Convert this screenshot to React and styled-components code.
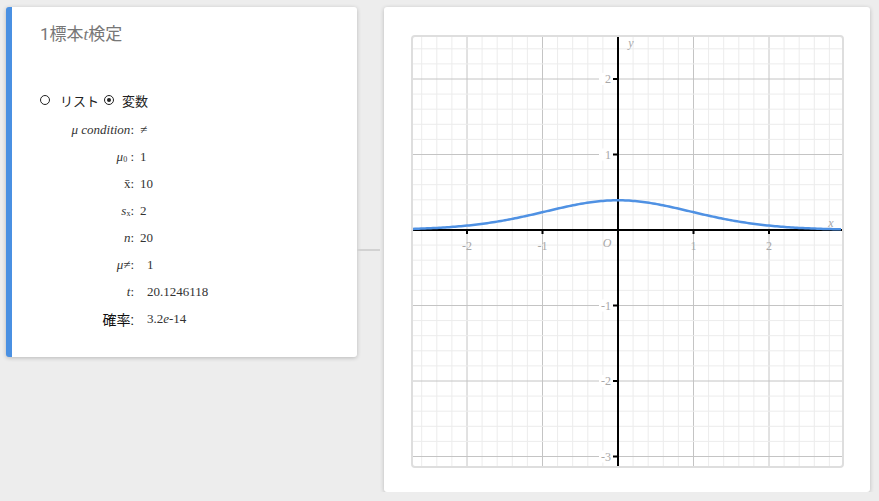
import React from "react";
import styled, { createGlobalStyle } from "styled-components";

const GlobalStyle = createGlobalStyle`
  html, body {
    margin: 0;
    background: #ededed;
  }
  body {
    font-family: Roboto, "Noto Sans CJK JP", sans-serif;
  }
`;

const Page = styled.div`
  display: flex;
  align-items: flex-start;
  padding: 7px 0 0 6px;
`;

const Card = styled.section`
  box-sizing: border-box;
  background: #fff;
  border-radius: 3px;
  box-shadow: 0 1px 4px rgba(0, 0, 0, 0.22);
`;

const TestCard = styled(Card)`
  width: 351px;
  height: 350px;
  border-left: 6px solid #4a90e2;
  padding: 17px 0 0 28px;
`;

const Title = styled.h2`
  margin: 0;
  height: 20px;
  line-height: 20px;
  font-size: 17px;
  font-weight: 400;
  color: #777;
`;

const MathVar = styled.i`
  font-family: "Liberation Serif", "DejaVu Serif", serif;
  font-style: italic;
`;

const RadioRow = styled.div`
  display: flex;
  align-items: center;
  height: 20px;
  margin-top: 46px;
  font-size: 13px;
  color: #222;
`;

const Radio = styled.span`
  box-sizing: border-box;
  width: 10px;
  height: 10px;
  border-radius: 50%;
  border: 1.5px solid #222;
  margin-right: ${(p) => (p.$checked ? "8px" : "10px")};
  display: flex;
  align-items: center;
  justify-content: center;

  &::after {
    content: "";
    display: ${(p) => (p.$checked ? "block" : "none")};
    width: 4px;
    height: 4px;
    border-radius: 50%;
    background: #222;
  }
`;

const RadioLabel = styled.span`
  margin-right: 5px;
`;

const Fields = styled.div`
  display: grid;
  grid-template-columns: 94px auto;
  grid-auto-rows: 27px;
  column-gap: 6px;
  align-items: center;
  margin-top: 6px;
`;

const Label = styled.span`
  justify-self: end;
  white-space: nowrap;
  font-family: ${(p) =>
    p.$cjk
      ? 'Roboto, "Noto Sans CJK JP", sans-serif'
      : '"Liberation Serif", "DejaVu Serif", serif'};
  font-style: ${(p) => (p.$cjk ? "normal" : "italic")};
  font-size: ${(p) => (p.$cjk ? "14px" : "13px")};
  color: ${(p) => (p.$cjk ? "#111" : "#333")};

  sub {
    font-size: 8px;
    font-style: normal;
    vertical-align: -1px;
  }
`;

const Plain = styled.span`
  font-style: normal;
`;

const Value = styled.span`
  font-family: "Liberation Serif", "DejaVu Serif", serif;
  font-size: 13px;
  color: #333;
  padding-left: ${(p) => (p.$indent ? "7px" : "0")};
`;

const Connector = styled.div`
  width: 23px;
  height: 2px;
  margin: 242px 4px 0 0;
  background: #d2d2d2;
`;

const GraphCard = styled(Card)`
  width: 486px;
  height: 485px;
  padding: 28px 26px 24px 27px;
`;

const GraphFrame = styled.div`
  box-sizing: border-box;
  width: 433px;
  height: 433px;
  border: 2px solid #dedede;
  border-radius: 4px;
  overflow: hidden;
  background: #fff;
`;

const W = 429;
const H = 429;
const OX = 205;
const OY = 193;
const U = 75.5;

// t distribution, 19 degrees of freedom
const pdf = (x) => 0.3937 * Math.pow(1 + (x * x) / 19, -10);

function Graph() {
  const step = U / 5;
  const vLines = [];
  for (let k = Math.ceil(-OX / step); k <= Math.floor((W - OX) / step); k++) {
    vLines.push({ k, pos: OX + k * step });
  }
  const hLines = [];
  for (let k = Math.ceil((OY - H) / step); k <= Math.floor(OY / step); k++) {
    hLines.push({ k, pos: OY - k * step });
  }
  const majorX = vLines.filter((l) => l.k % 5 === 0 && l.k !== 0);
  const majorY = hLines.filter((l) => l.k % 5 === 0 && l.k !== 0);

  let d = "";
  for (let px = 0; px <= W; px += 2) {
    const y = OY - pdf((px - OX) / U) * U;
    d += `${px === 0 ? "M" : "L"}${px},${y.toFixed(2)} `;
  }

  const labelFont = { fontFamily: '"Liberation Serif", "DejaVu Serif", serif', fontSize: 12, fill: "#a8a8a8" };
  const num = (k) => (k < 0 ? `-${-k / 5}` : `${k / 5}`);

  return (
    <svg width={W} height={H} viewBox={`0 0 ${W} ${H}`}>
      {vLines.map((l) => (
        <line key={`v${l.k}`} x1={l.pos} x2={l.pos} y1={0} y2={H}
          stroke={l.k % 5 === 0 ? "#c4c4c4" : "#ececec"} strokeWidth="1" />
      ))}
      {hLines.map((l) => (
        <line key={`h${l.k}`} x1={0} x2={W} y1={l.pos} y2={l.pos}
          stroke={l.k % 5 === 0 ? "#c4c4c4" : "#ececec"} strokeWidth="1" />
      ))}
      {majorY.map((l) => (
        <g key={`yl${l.k}`}>
          <rect x={OX - 19} y={l.pos - 6} width={14} height={12} fill="#fff" />
          <text x={OX - 7} y={l.pos + 4} textAnchor="end" {...labelFont}>{num(l.k)}</text>
        </g>
      ))}
      {majorX.map((l) => (
        <text key={`xl${l.k}`} x={l.pos} y={OY + 20} textAnchor="middle" {...labelFont}>{num(l.k)}</text>
      ))}
      <text x={OX - 11} y={OY + 17} textAnchor="middle" fontStyle="italic" {...labelFont}>O</text>
      <text x={OX + 13} y={10} textAnchor="middle" fontStyle="italic" {...labelFont}>y</text>
      <text x={418} y={190} textAnchor="middle" fontStyle="italic" {...labelFont}>x</text>

      <line x1={0} x2={W} y1={OY} y2={OY} stroke="#000" strokeWidth="2" />
      <line x1={OX} x2={OX} y1={0} y2={H} stroke="#000" strokeWidth="2" />
      {majorY.map((l) => (
        <line key={`yt${l.k}`} x1={OX - 5} x2={OX} y1={l.pos} y2={l.pos} stroke="#000" strokeWidth="2" />
      ))}
      {majorX.map((l) => (
        <line key={`xt${l.k}`} x1={l.pos} x2={l.pos} y1={OY} y2={OY + 4} stroke="#000" strokeWidth="2" />
      ))}

      <path d={d} fill="none" stroke="#4f91e3" strokeWidth="2.5" strokeLinejoin="round" />
    </svg>
  );
}

export default function App() {
  return (
    <>
      <GlobalStyle />
      <Page>
        <TestCard>
          <Title>
            1標本<MathVar>t</MathVar>検定
          </Title>
          <RadioRow>
            <Radio />
            <RadioLabel>リスト</RadioLabel>
            <Radio $checked />
            <span>変数</span>
          </RadioRow>
          <Fields>
            <Label>μ condition<Plain>:</Plain></Label>
            <Value>≠</Value>

            <Label>μ<sub>0</sub> <Plain>:</Plain></Label>
            <Value>1</Value>

            <Label><Plain>x̄:</Plain></Label>
            <Value>10</Value>

            <Label>s<sub>x</sub><Plain>:</Plain></Label>
            <Value>2</Value>

            <Label>n<Plain>:</Plain></Label>
            <Value>20</Value>

            <Label>μ<Plain>≠:</Plain></Label>
            <Value $indent>1</Value>

            <Label>t<Plain>:</Plain></Label>
            <Value $indent>20.1246118</Value>

            <Label $cjk>確率:</Label>
            <Value $indent>3.2<MathVar>e</MathVar>-14</Value>
          </Fields>
        </TestCard>
        <Connector />
        <GraphCard>
          <GraphFrame>
            <Graph />
          </GraphFrame>
        </GraphCard>
      </Page>
    </>
  );
}
